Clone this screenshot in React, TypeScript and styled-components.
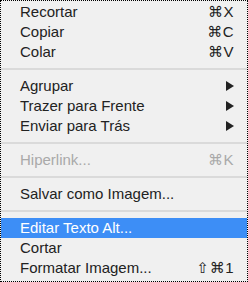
import React from 'react';
import styled, { createGlobalStyle } from 'styled-components';

type Item =
  | { kind: 'sep' }
  | { kind: 'item'; label: string; shortcut?: string; submenu?: boolean; disabled?: boolean; active?: boolean };

const items: Item[] = [
  { kind: 'item', label: 'Recortar', shortcut: '⌘X' },
  { kind: 'item', label: 'Copiar', shortcut: '⌘C' },
  { kind: 'item', label: 'Colar', shortcut: '⌘V' },
  { kind: 'sep' },
  { kind: 'item', label: 'Agrupar', submenu: true },
  { kind: 'item', label: 'Trazer para Frente', submenu: true },
  { kind: 'item', label: 'Enviar para Trás', submenu: true },
  { kind: 'sep' },
  { kind: 'item', label: 'Hiperlink...', shortcut: '⌘K', disabled: true },
  { kind: 'sep' },
  { kind: 'item', label: 'Salvar como Imagem...' },
  { kind: 'sep' },
  { kind: 'item', label: 'Editar Texto Alt...', active: true },
  { kind: 'item', label: 'Cortar' },
  { kind: 'item', label: 'Formatar Imagem...', shortcut: '⇧⌘1' },
];

const GlobalStyle = createGlobalStyle`
  html, body {
    margin: 0;
    padding: 0;
    background: #f0f0f0;
  }
`;

const Menu = styled.div`
  box-sizing: border-box;
  width: 248px;
  height: 282px;
  border: 1px dotted #000;
  background: #f0f0f0;
  padding: 1px 0 3px;
  display: flex;
  flex-direction: column;
  font-family: 'Liberation Sans', Arial, 'DejaVu Sans', sans-serif;
  font-size: 15px;
  color: #222;
`;

const Row = styled.div<{ $disabled?: boolean; $active?: boolean }>`
  height: 20px;
  display: flex;
  align-items: center;
  justify-content: space-between;
  padding: 0 13px 0 19px;
  background: ${({ $active }) => ($active ? '#3d8ef6' : 'transparent')};
  color: ${({ $disabled, $active }) => ($active ? '#fff' : $disabled ? '#a9a9a9' : '#222')};
  white-space: nowrap;
`;

const Label = styled.span`
  line-height: 20px;
`;

const Shortcut = styled.span`
  line-height: 20px;
  font-family: 'Liberation Sans', 'DejaVu Sans', sans-serif;
  letter-spacing: 0.5px;
`;

const Separator = styled.div`
  height: 14px;
  display: flex;
  align-items: center;

  &::after {
    content: '';
    flex: 1;
    height: 2px;
    background: #dadada;
  }
`;

const Arrow = () => (
  <svg width="8" height="10" viewBox="0 0 8 10">
    <polygon points="0,0 8,5 0,10" fill="#222" />
  </svg>
);

export default function App() {
  return (
    <>
      <GlobalStyle />
      <Menu>
        {items.map((it, i) =>
          it.kind === 'sep' ? (
            <Separator key={i} />
          ) : (
            <Row key={i} $disabled={it.disabled} $active={it.active}>
              <Label>{it.label}</Label>
              {it.shortcut && <Shortcut>{it.shortcut}</Shortcut>}
              {it.submenu && <Arrow />}
            </Row>
          )
        )}
      </Menu>
    </>
  );
}
